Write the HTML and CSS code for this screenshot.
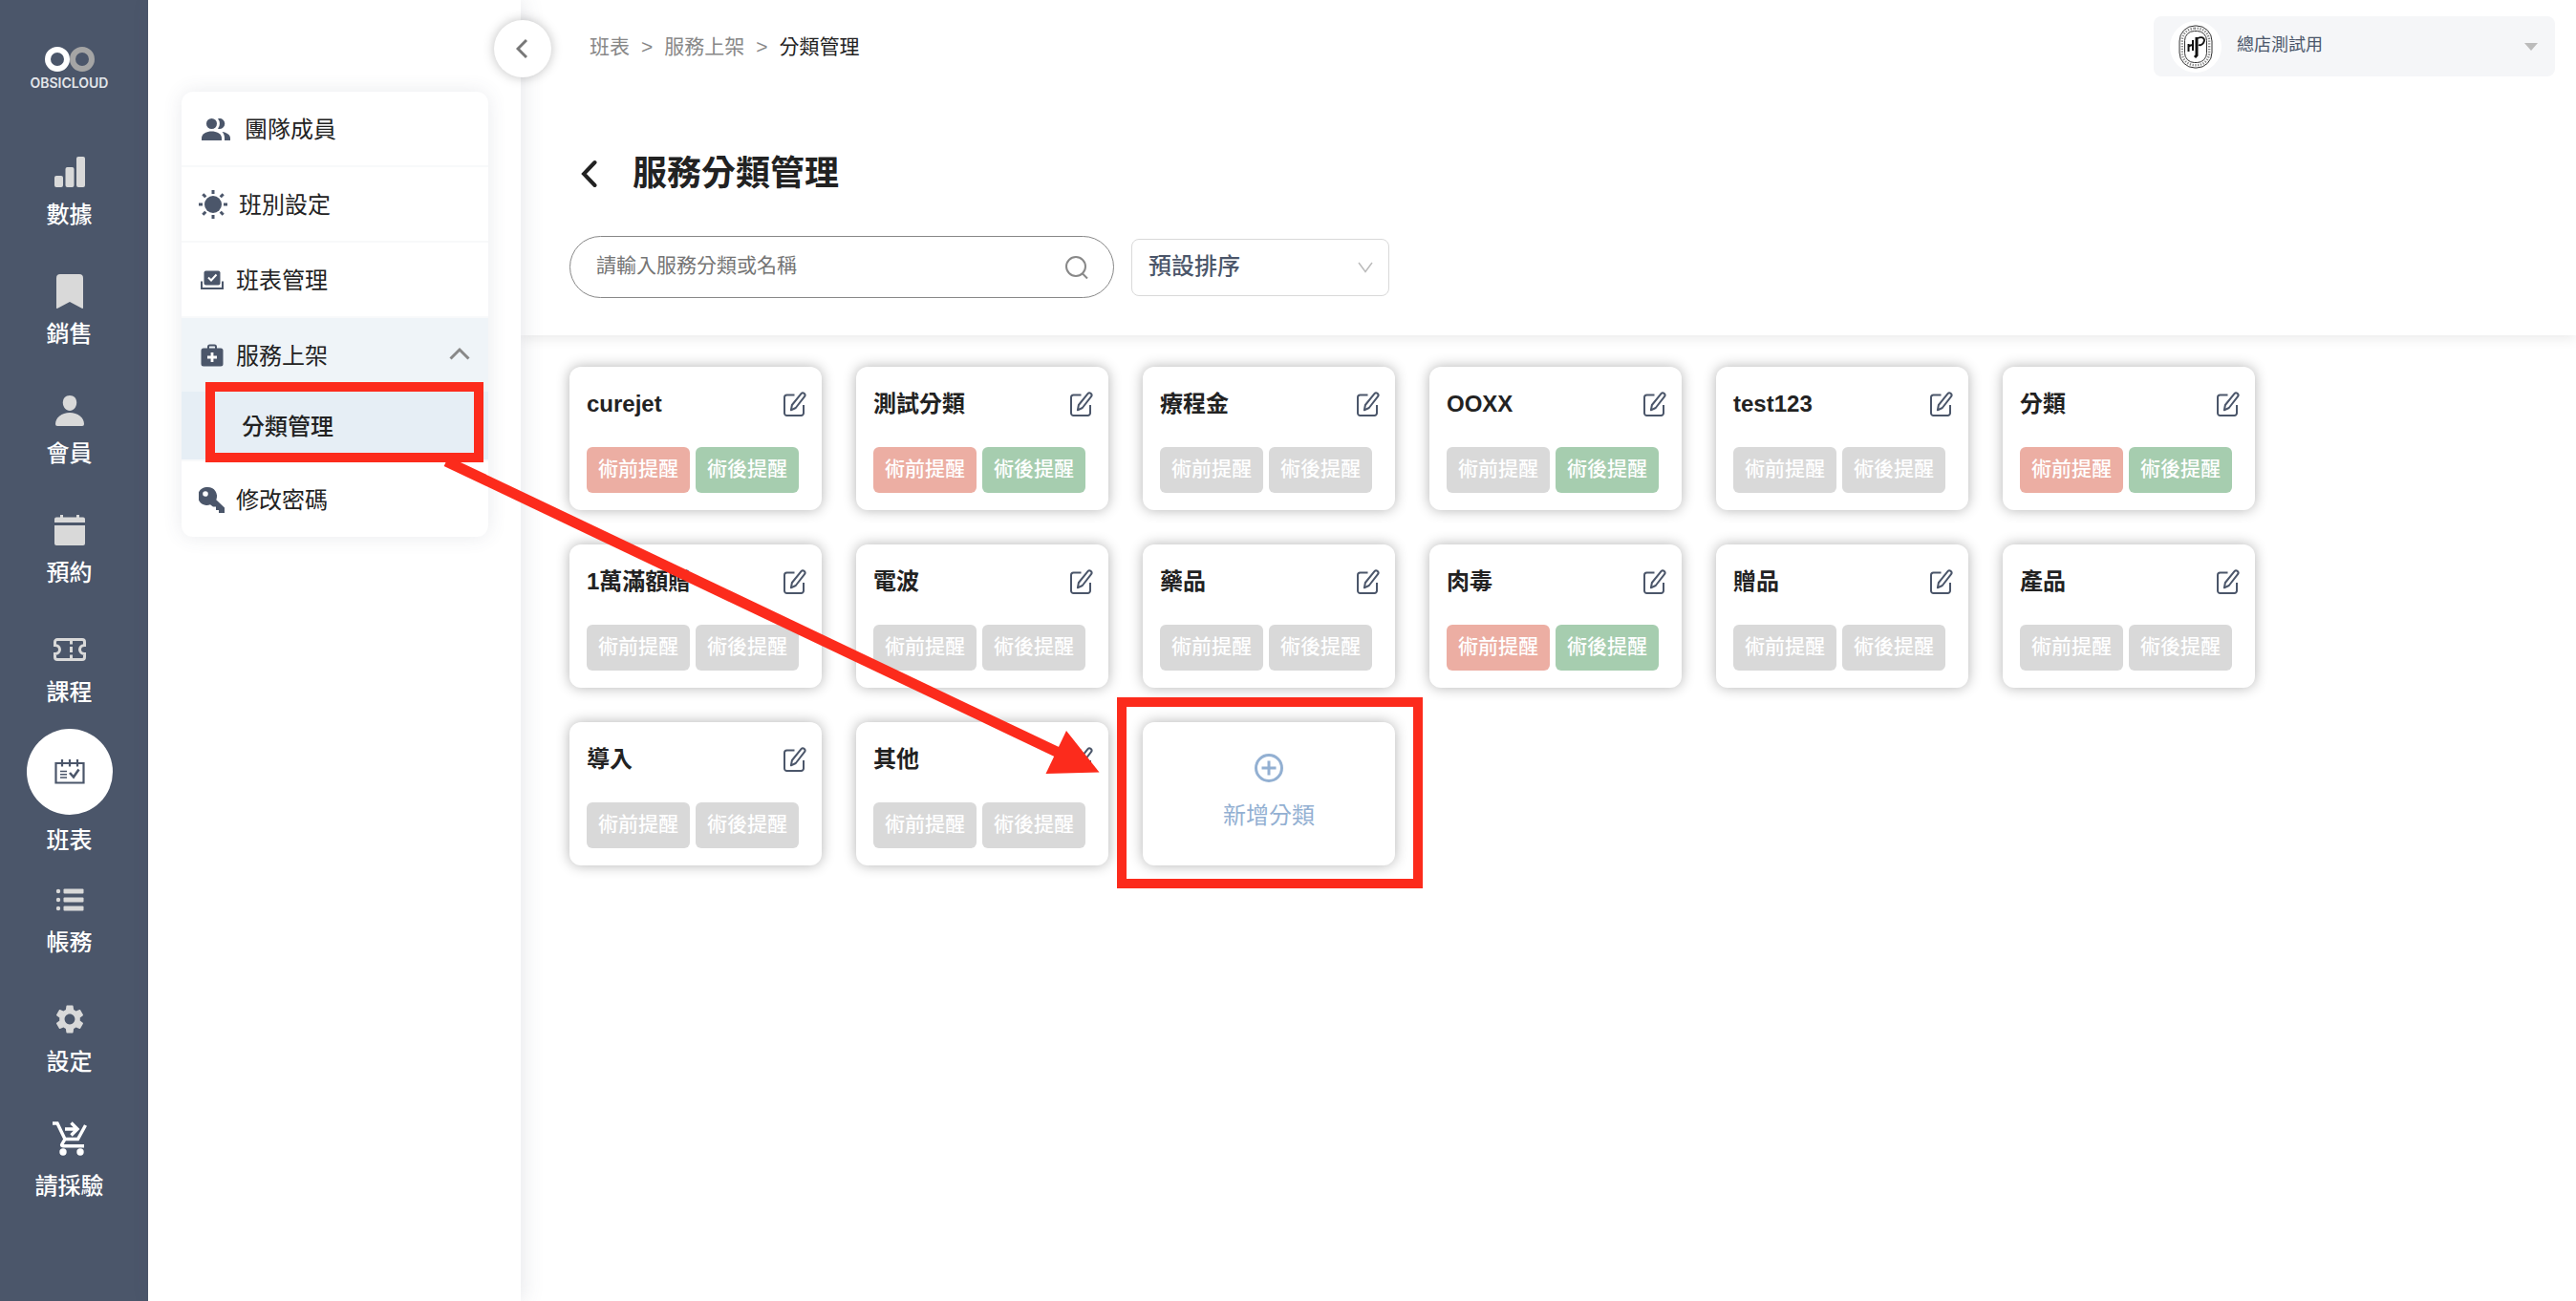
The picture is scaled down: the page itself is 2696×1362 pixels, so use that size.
FILE: index.html
```html
<!DOCTYPE html>
<html lang="zh-Hant">
<head>
  <meta charset="UTF-8">
  <title>服務分類管理</title>
  <link rel="stylesheet" href="styles.css">
</head>
<body>

  <!-- 共用圖示 -->
  <svg class="sprite" width="0" height="0" aria-hidden="true">
    <symbol id="icon-edit" viewBox="0 0 24 26">
      <path d="M11.500 3.500H3.500A2.500 2.500 0 0 0 1 6v16.500A2.500 2.500 0 0 0 3.500 25h15a2.500 2.500 0 0 0 2.500-2.500V14" />
      <path d="M18.500 2.200a2.300 2.300 0 0 1 3.700 2.700L12.800 17l-4.900 2.300 1-5.300z" />
    </symbol>
  </svg>

  <div class="app">
    <nav class="rail">
      <a class="logo" href="#">
        <svg width="52" height="28" viewBox="0 0 52 28" fill="none" stroke-width="6">
          <circle cx="39" cy="14" r="10" stroke="#a5a5a5" />
          <circle cx="13" cy="14" r="10" stroke="#fff" />
        </svg>
        <span>OBSICLOUD</span>
      </a>

      <a class="rail-item" href="#">
        <span class="rail-icon">
          <svg width="32" height="32" viewBox="0 0 32 32" fill="#d9d9d9">
            <rect x="0" y="20" width="9" height="12" rx="2" />
            <rect x="11.500" y="11" width="9" height="21" rx="2" />
            <rect x="23" y="0" width="9" height="32" rx="2" />
          </svg>
        </span>
        數據
      </a>
      <a class="rail-item" href="#">
        <span class="rail-icon">
          <svg width="28" height="36" viewBox="0 0 28 36" fill="#d9d9d9">
            <path d="M4 0h20a4 4 0 0 1 4 4v31q0 1.400-1.300.7L14 29 1.300 35.700Q0 36.400 0 35V4a4 4 0 0 1 4-4z" />
          </svg>
        </span>
        銷售
      </a>
      <a class="rail-item" href="#">
        <span class="rail-icon">
          <svg width="30" height="32" viewBox="0 0 30 32" fill="#d9d9d9">
            <path d="M15 0c4.500 0 7.200 3 7.200 7.500S19 16 15 16 7.800 12 7.800 7.500 10.500 0 15 0z" />
            <path d="M0 30c0-7 6.500-12 15-12s15 5 15 12q0 2-2 2H2q-2 0-2-2z" />
          </svg>
        </span>
        會員
      </a>
      <a class="rail-item" href="#">
        <span class="rail-icon">
          <svg width="32" height="32" viewBox="0 0 32 32" fill="#d9d9d9">
            <path d="M2 2.500h4V0h3v2.500h14V0h3v2.500h4a2 2 0 0 1 2 2V8H0V4.500a2 2 0 0 1 2-2z" />
            <path d="M0 11h32v19a2 2 0 0 1-2 2H2a2 2 0 0 1-2-2z" />
          </svg>
        </span>
        預約
      </a>
      <a class="rail-item" href="#">
        <span class="rail-icon">
          <svg width="34" height="24" viewBox="0 0 34 24" fill="none" stroke="#d9d9d9" stroke-width="3">
            <path d="M4 1.500h26a2.500 2.500 0 0 1 2.500 2.500v3.500c-3 0-5 2-5 4.500s2 4.500 5 4.500V20a2.500 2.500 0 0 1-2.500 2.500H4A2.500 2.500 0 0 1 1.500 20v-3.500c3 0 5-2 5-4.500s-2-4.500-5-4.500V4A2.500 2.500 0 0 1 4 1.500z" />
            <path d="M18.500 2v4.500M18.500 9v6M18.500 17.500V22" />
          </svg>
        </span>
        課程
      </a>
      <a class="rail-item active" href="#">
        <span class="rail-icon">
          <svg width="32" height="26" viewBox="0 0 32 26" fill="none" stroke="#4b566a" stroke-width="2.200">
            <path d="M1.500 4h29v20.500h-29z" />
            <path d="M8 0v7.500M16 0v7.500M24 0v7.500" />
            <path d="M6 12.500h7M6 15.800h7M6 19h7" stroke-width="1.500" />
            <path d="M16 14l4 4.500 5.500-8" stroke-width="2.600" />
          </svg>
        </span>
        班表
      </a>
      <a class="rail-item" href="#">
        <span class="rail-icon">
          <svg width="30" height="24" viewBox="0 0 30 24" fill="#d9d9d9">
            <circle cx="3" cy="3" r="2.200" />
            <circle cx="3" cy="12" r="2.200" />
            <circle cx="3" cy="21" r="2.200" />
            <rect x="8.500" y="0.500" width="21" height="5" rx="1" />
            <rect x="8.500" y="9.500" width="21" height="5" rx="1" />
            <rect x="8.500" y="18.500" width="21" height="5" rx="1" />
          </svg>
        </span>
        帳務
      </a>
      <a class="rail-item" href="#">
        <span class="rail-icon">
          <svg width="36" height="36" viewBox="0 0 24 24" fill="#d9d9d9">
            <path d="M19.140 12.940c.04-.3.06-.61.06-.94 0-.32-.02-.64-.07-.94l2.030-1.580c.18-.14.23-.41.12-.61l-1.920-3.320c-.12-.22-.37-.29-.59-.22l-2.390.96c-.5-.38-1.030-.7-1.620-.94l-.36-2.540c-.04-.24-.24-.41-.48-.41h-3.840c-.24 0-.43.17-.47.41l-.36 2.540c-.59.24-1.130.57-1.620.94l-2.390-.96c-.22-.08-.47 0-.59.22L2.740 8.870c-.12.21-.08.47.12.61l2.030 1.580c-.05.3-.09.63-.09.94s.02.64.07.94l-2.030 1.580c-.18.14-.23.41-.12.61l1.920 3.320c.12.22.37.29.59.22l2.390-.96c.5.38 1.030.7 1.620.94l.36 2.540c.05.24.24.41.48.41h3.840c.24 0 .44-.17.47-.41l.36-2.540c.59-.24 1.130-.56 1.620-.94l2.390.96c.22.08.47 0 .59-.22l1.920-3.320c.12-.22.07-.47-.12-.61l-2.010-1.580zM12 15.600c-1.980 0-3.600-1.620-3.600-3.600s1.620-3.600 3.600-3.600 3.600 1.620 3.600 3.600-1.620 3.600-3.600 3.600z" />
          </svg>
        </span>
        設定
      </a>
      <a class="rail-item" href="#">
        <span class="rail-icon cart">
          <svg width="36" height="36" viewBox="0 0 36 36" fill="none" stroke="#fff" stroke-width="3.400">
            <path d="M0 2h5l8 16.500h13.500L34.500 4" />
            <path d="M13 18.500L9.800 24q-.8 1.700 1.200 1.700h22" />
            <path d="M13 8h12M19.500 1.500L26 8l-6.500 6.500" />
            <circle cx="11" cy="32" r="3.700" fill="#fff" stroke="none" />
            <circle cx="29" cy="32" r="3.700" fill="#fff" stroke="none" />
          </svg>
        </span>
        請採驗
      </a>
    </nav>

    <aside class="side">
      <button class="collapse" type="button" aria-label="收合選單">
        <svg width="12" height="22" viewBox="0 0 12 22"><path d="M11 2L2 11l9 9" /></svg>
      </button>

      <div class="menu">
        <a class="menu-item wide" href="#">
          <svg width="30" height="23" viewBox="0 0 30 23" fill="#4b566a">
            <circle cx="10.500" cy="5.500" r="5.500" />
            <path d="M17 .3a5.500 5.500 0 1 1 0 10.400 8 8 0 0 0 0-10.400z" />
            <path d="M0 23v-2.500C0 16 5.500 13.500 10.500 13.500S21 16 21 20.500V23z" />
            <path d="M21.500 14c4.500.8 8.500 3 8.500 6.500V23h-6v-2.500c0-2.800-1-5-2.500-6.500z" />
          </svg>
          團隊成員
        </a>
        <a class="menu-item sun" href="#">
          <svg width="30" height="30" viewBox="0 0 30 30" fill="#4b566a" stroke="#4b566a" stroke-width="3">
            <circle cx="15" cy="15" r="9" stroke="none" />
            <path d="M15 0v4M15 26v4M0 15h4M26 15h4M4.300 4.300l3 3M22.700 22.700l3 3M25.700 4.300l-3 3M7.300 22.700l-3 3" />
          </svg>
          班別設定
        </a>
        <a class="menu-item" href="#">
          <svg width="24" height="20" viewBox="0 0 24 20" fill="#4b566a">
            <rect x="3.500" y="0.500" width="17" height="15" rx="2" />
            <path d="M8 7.500l3 3 5.500-6" fill="none" stroke="#fff" stroke-width="2" />
            <path d="M2.500 10v7.500h19V10" fill="none" stroke="#fff" stroke-width="1" />
            <path d="M1 11.500V19h22v-7.500" fill="none" stroke="#4b566a" stroke-width="2" />
          </svg>
          班表管理
        </a>
        <a class="menu-item open" href="#">
          <svg width="24" height="24" viewBox="0 0 24 24" fill="#4b566a">
            <path d="M8 5V3a1.500 1.500 0 0 1 1.500-1.500h5A1.500 1.500 0 0 1 16 3v2" fill="none" stroke="#4b566a" stroke-width="2" />
            <rect x="0.500" y="4.500" width="23" height="19" rx="2.500" />
            <path d="M12 9v10M7 14h10" stroke="#fff" stroke-width="2.800" />
          </svg>
          服務上架
          <svg class="chevron" width="22" height="14" viewBox="0 0 22 14"><path d="M1.500 12.500L11 3l9.500 9.500" /></svg>
        </a>
        <a class="menu-sub" href="#">
          分類管理
          <span class="mark mark-menu"></span>
        </a>
        <a class="menu-item" href="#">
          <svg width="27" height="27" viewBox="0 0 27 27" fill="#4b566a">
            <path fill-rule="evenodd" d="M9.500 0a9.500 9.500 0 0 1 8.800 13.200L27 21.500V27h-6v-3h-3v-3.500h-3l-3-2.200A9.500 9.500 0 1 1 9.500 0zM7 4.200a2.800 2.800 0 1 0 0 5.600 2.800 2.800 0 0 0 0-5.600z" />
          </svg>
          修改密碼
        </a>
      </div>
    </aside>

    <main class="main">
      <header class="header">
        <div class="topbar">
          <nav class="breadcrumb">
            <a href="#">班表</a>
            <span>&gt;</span>
            <a href="#">服務上架</a>
            <span>&gt;</span>
            <strong>分類管理</strong>
          </nav>
          <div class="store">
            <span class="avatar">
              <svg width="36" height="46" viewBox="0 0 36 46" fill="none" stroke="#333">
                <rect x="1" y="1" width="34" height="44" rx="16" stroke-width="1" />
                <rect x="3.800" y="3.800" width="28.400" height="38.400" rx="13" stroke-width="2.400" stroke-dasharray="1.300 1.500" stroke="#888" />
                <rect x="6.500" y="6.500" width="23" height="33" rx="10" stroke-width="1" />
                <path d="M10.500 20v8M10.500 23c2-2.500 4-2 5-1M15 16v11" stroke="#111" stroke-width="2" />
                <path d="M19 13v19l-2 2" stroke="#111" stroke-width="3" />
                <path d="M20 14c6-2.500 8.500 1 6 5-1.500 2.300-4 2.500-5 2" stroke="#111" stroke-width="1.800" />
              </svg>
            </span>
            <select class="store-select" aria-label="店家">
              <option>總店測試用</option>
            </select>
            <svg class="caret" width="14" height="8" viewBox="0 0 14 8"><path d="M0 0h14L7 8z" fill="#bbb" /></svg>
          </div>
        </div>

        <div class="title-row">
          <button class="back" type="button" aria-label="返回">
            <svg width="17" height="30" viewBox="0 0 17 30"><path d="M14.500 3L3 15l11.500 12" /></svg>
          </button>
          <h1>服務分類管理</h1>
        </div>

        <div class="filters">
          <div class="search">
            <input type="text" placeholder="請輸入服務分類或名稱" aria-label="搜尋服務分類">
            <button type="button" aria-label="搜尋">
              <svg width="24" height="24" viewBox="0 0 24 24"><circle cx="11" cy="11" r="10" /><path d="M17.500 18l5.500 5.500" /></svg>
            </button>
          </div>
          <div class="sort">
            <select aria-label="排序方式">
              <option>預設排序</option>
            </select>
            <svg width="16" height="12" viewBox="0 0 16 12"><path d="M1 1l7 9.500L15 1" /></svg>
          </div>
        </div>
      </header>

      <section class="grid" id="categories">
        <button class="card card-add" type="button">
          <svg width="30" height="30" viewBox="0 0 30 30"><circle cx="15" cy="15" r="13.500" /><path d="M15 7.500v15M7.500 15h15" /></svg>
          新增分類
          <span class="mark mark-add"></span>
        </button>
      </section>
    </main>

    <svg class="arrow" width="700" height="340" viewBox="0 0 700 340" aria-hidden="true">
      <path d="M12 3l643 306" stroke="#fc2b1c" stroke-width="11" />
      <path d="M661 285l34.500 43.500-56 1.500z" fill="#fc2b1c" />
    </svg>
  </div>

  <script>
    // before: 術前提醒, after: 術後提醒
    const categories = [
      { name: "curejet", before: true, after: true },
      { name: "測試分類", before: true, after: true },
      { name: "療程金" },
      { name: "OOXX", after: true },
      { name: "test123" },
      { name: "分類", before: true, after: true },
      { name: "1萬滿額贈" },
      { name: "電波" },
      { name: "藥品" },
      { name: "肉毒", before: true, after: true },
      { name: "贈品" },
      { name: "產品" },
      { name: "導入" },
      { name: "其他" }
    ];

    const grid = document.getElementById("categories");
    const addCard = grid.querySelector(".card-add");

    categories.forEach(item => {
      const card = document.createElement("article");
      card.className = "card";
      card.innerHTML = `
        <div class="card-head">
          <h2>${item.name}</h2>
          <button class="edit" type="button" aria-label="編輯 ${item.name}">
            <svg width="24" height="26"><use href="#icon-edit"></use></svg>
          </button>
        </div>
        <div class="tags">
          <span class="tag ${item.before ? "before" : ""}">術前提醒</span>
          <span class="tag ${item.after ? "after" : ""}">術後提醒</span>
        </div>`;
      grid.insertBefore(card, addCard);
    });
  </script>
</body>
</html>
```
FILE: styles.css
```css
* {
  box-sizing: border-box;
}

body {
  margin: 0;
  font-family: "Liberation Sans", "Noto Sans CJK TC", sans-serif;
  font-size: 24px;
  color: #222;
  background: #fff;
}

a {
  color: inherit;
  text-decoration: none;
}

button, input, select {
  font: inherit;
  color: inherit;
  border: 0;
  background: none;
  padding: 0;
  outline: none;
}

button {
  cursor: pointer;
}

svg {
  display: block;
  flex: none;
}

.sprite {
  position: absolute;
}

.app {
  position: relative;
  display: flex;
  min-height: 100vh;
}

/* 左側主選單 */
.rail {
  width: 155px;
  flex: none;
  padding: 48px 10px 40px 0;
  background: #4b566a;
  color: #fff;
}

.logo {
  display: flex;
  flex-direction: column;
  align-items: center;
  gap: 3px;
  height: 88px;
  font-family: Inter, sans-serif;
  font-size: 14px;
  font-weight: 600;
  line-height: 16px;
  color: #e4e6ea;
}

.rail-item {
  display: flex;
  flex-direction: column;
  align-items: center;
  gap: 5px;
  padding: 20px 0;
  font-weight: 500;
  line-height: 32px;
}

.rail-icon {
  display: flex;
  align-items: center;
  justify-content: center;
  height: 48px;
}

.rail-icon.cart {
  margin-bottom: 5px;
}

.rail-item.active {
  gap: 11px;
  padding: 2px 0;
}

.rail-item.active .rail-icon {
  width: 90px;
  height: 90px;
  border-radius: 50%;
  background: #fff;
}

/* 次選單 */
.side {
  position: relative;
  z-index: 2;
  width: 390px;
  flex: none;
  padding: 96px 34px 0 35px;
  background: #fff;
  box-shadow: 4px 0 20px rgba(75, 86, 106, 0.12);
}

.collapse {
  position: absolute;
  top: 21px;
  right: -32px;
  display: flex;
  align-items: center;
  justify-content: center;
  width: 60px;
  height: 60px;
  padding-right: 2px;
  border-radius: 50%;
  background: #fff;
  box-shadow: 0 0 12px rgba(0, 0, 0, 0.25);
}

.collapse path {
  fill: none;
  stroke: #777;
  stroke-width: 3;
}

.menu {
  border-radius: 12px;
  box-shadow: 0 0 20px rgba(75, 86, 106, 0.12);
}

.menu-item {
  display: flex;
  align-items: center;
  gap: 13px;
  height: 79px;
  padding-left: 20px;
  padding-bottom: 3px;
  border-bottom: 2px solid #f8f9fa;
}

.menu-item svg {
  margin-top: 4px;
}

.menu-item.wide {
  gap: 15px;
  padding-left: 21px;
}

.menu-item.sun {
  gap: 12px;
  padding-left: 18px;
}

.menu-item.open {
  height: 77px;
  border-bottom: 0;
  background: #eff4f8;
}

.menu-item:last-child {
  gap: 12px;
  padding-left: 18px;
  border-bottom: 0;
}

.menu-item .chevron {
  margin: 0 19px 0 auto;
}

.chevron path {
  fill: none;
  stroke: #888;
  stroke-width: 3;
}

.menu-sub {
  position: relative;
  display: flex;
  align-items: center;
  height: 73px;
  padding-left: 63px;
  padding-bottom: 3px;
  border-bottom: 2px solid #f8f9fa;
  background: #e6eef5;
  font-weight: 500;
}

/* 主內容 */
.main {
  flex: 1;
  min-width: 0;
}

.header {
  padding: 17px 22px 39px 51px;
  box-shadow: 0 4px 12px rgba(0, 0, 0, 0.08);
}

.topbar {
  display: flex;
  align-items: center;
  justify-content: space-between;
  padding-left: 21px;
}

.breadcrumb {
  display: flex;
  gap: 12px;
  font-size: 21px;
  line-height: 30px;
  color: #888;
}

.breadcrumb strong {
  font-weight: 400;
  color: #222;
}

.store {
  position: relative;
  display: flex;
  align-items: center;
  width: 420px;
  height: 63px;
  padding-left: 17px;
  border-radius: 8px;
  background: #f5f6f8;
}

.avatar {
  display: flex;
  align-items: center;
  justify-content: center;
  width: 54px;
  height: 54px;
  border-radius: 50%;
  background: #fff;
}

.store-select {
  flex: 1;
  height: 60px;
  padding: 0 40px 4px 16px;
  appearance: none;
  font-size: 18px;
  color: #4b566a;
}

.caret {
  position: absolute;
  right: 18px;
}

.title-row {
  display: flex;
  align-items: center;
  gap: 37px;
  margin-top: 78px;
  padding-left: 12px;
}

.title-row h1 {
  margin: 0;
  font-size: 36px;
  line-height: 48px;
}

.back path {
  fill: none;
  stroke: #222;
  stroke-width: 4;
  stroke-linecap: round;
}

.filters {
  display: flex;
  align-items: center;
  gap: 18px;
  margin-top: 41px;
}

.search {
  display: flex;
  align-items: center;
  width: 570px;
  height: 65px;
  padding: 0 26px 0 27px;
  border: 1px solid #888;
  border-radius: 33px;
}

.search input {
  flex: 1;
  min-width: 0;
  padding-bottom: 3px;
  font-size: 21px;
}

.search input::placeholder {
  color: #757575;
}

.search circle, .search path {
  fill: none;
  stroke: #888;
  stroke-width: 2;
}

.sort {
  position: relative;
  display: flex;
  align-items: center;
  width: 270px;
  height: 60px;
  border: 1px solid #d9d9d9;
  border-radius: 8px;
}

.sort select {
  width: 100%;
  height: 58px;
  padding: 0 40px 3px 17px;
  appearance: none;
  font-weight: 500;
  color: #4b566a;
}

.sort svg {
  position: absolute;
  right: 16px;
}

.sort path {
  fill: none;
  stroke: #bbb;
  stroke-width: 1.5;
}

.grid {
  display: grid;
  grid-template-columns: repeat(auto-fill, 264px);
  gap: 36px;
  max-width: 1866px;
  padding: 33px 51px;
}

.card {
  height: 150px;
  padding: 21px 16px 18px 18px;
  border-radius: 12px;
  background: #fff;
  box-shadow: 0 0 14px rgba(0, 0, 0, 0.3);
}

.card-head {
  display: flex;
  align-items: center;
  justify-content: space-between;
}

.card h2 {
  margin: 0;
  font-size: 24px;
  line-height: 36px;
}

.edit svg {
  fill: none;
  stroke: #4b566a;
  stroke-width: 2;
  stroke-linejoin: round;
}

.tags {
  display: flex;
  gap: 6px;
  margin-top: 27px;
}

.tag {
  padding: 8px 12px 10px;
  border-radius: 6px;
  background: #d9d9d9;
  color: #fff;
  font-size: 21px;
  font-weight: 500;
  line-height: 30px;
}

.tag.before {
  background: #ecaea3;
}

.tag.after {
  background: #a6cdaf;
}

.card-add {
  position: relative;
  display: flex;
  flex-direction: column;
  align-items: center;
  justify-content: center;
  gap: 17px;
  padding: 0 0 2px;
  line-height: 36px;
  color: #93b0d2;
}

.card-add svg {
  fill: none;
  stroke: #93b0d2;
  stroke-width: 3;
}

/* 操作教學標示 */
.mark {
  position: absolute;
  border: 10px solid #fc2b1c;
  pointer-events: none;
}

.mark-menu {
  inset: -10px 5px -3px 25px;
}

.mark-add {
  inset: -26px -29px -24px -27px;
}

.arrow {
  position: absolute;
  z-index: 3;
  top: 480px;
  left: 455px;
  pointer-events: none;
}
```
